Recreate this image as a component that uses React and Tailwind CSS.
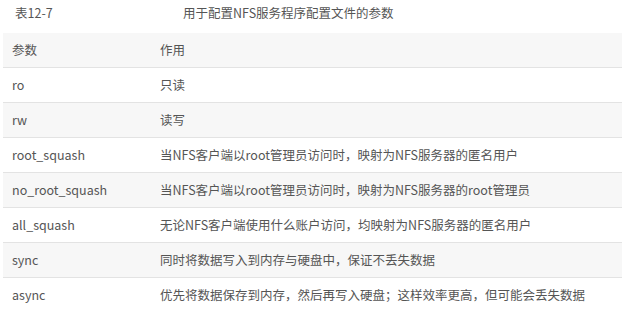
export default function App() {
  const rows = [
    ["ro", "只读"],
    ["rw", "读写"],
    ["root_squash", "当NFS客户端以root管理员访问时，映射为NFS服务器的匿名用户"],
    ["no_root_squash", "当NFS客户端以root管理员访问时，映射为NFS服务器的root管理员"],
    ["all_squash", "无论NFS客户端使用什么账户访问，均映射为NFS服务器的匿名用户"],
    ["sync", "同时将数据写入到内存与硬盘中，保证不丢失数据"],
    ["async", "优先将数据保存到内存，然后再写入硬盘；这样效率更高，但可能会丢失数据"],
  ];
  return (
    <div className="w-[622px] h-[312px] bg-white overflow-hidden text-[12.5px] text-[#555] leading-none" style={{ fontFamily: '"Noto Sans CJK SC", "Noto Sans", sans-serif' }}>
      <div className="flex h-[33px] items-center pb-[7px]">
        <div className="w-[183px] pl-[15px]">表12-7</div>
        <div>用于配置NFS服务程序配置文件的参数</div>
      </div>
      <div className="ml-[3px]">
        <div className="flex h-[35px] items-center bg-[#f7f7f7] border-b border-[#e3e3e3]">
          <div className="w-[157px] pl-[9px]">参数</div>
          <div>作用</div>
        </div>
        {rows.map((r, i) => (
          <div key={i} className={`flex h-[35px] items-center border-b border-[#e3e3e3] ${i % 2 === 1 ? "bg-[#f7f7f7]" : "bg-white"}`}>
            <div className="w-[157px] pl-[9px]">{r[0]}</div>
            <div>{r[1]}</div>
          </div>
        ))}
      </div>
    </div>
  );
}
